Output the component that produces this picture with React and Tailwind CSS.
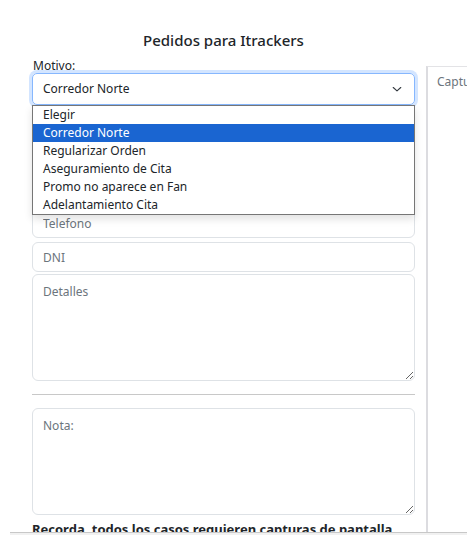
const font = { fontFamily: '"Segoe UI", "Noto Sans", "Open Sans", sans-serif' };

const options = [
  'Elegir',
  'Corredor Norte',
  'Regularizar Orden',
  'Aseguramiento de Cita',
  'Promo no aparece en Fan',
  'Adelantamiento Cita',
];

function Input({ placeholder }) {
  return (
    <input
      type="text"
      placeholder={placeholder}
      className="h-[30px] w-full rounded-[6px] border border-[#dee2e6] bg-white px-[10px] text-[12px] text-[#212529] placeholder:text-[#6c757d] outline-none"
    />
  );
}

function Area({ placeholder, className = '' }) {
  return (
    <textarea
      placeholder={placeholder}
      className={`block h-[107px] w-full rounded-[6px] border border-[#dee2e6] bg-white px-[10px] py-[8px] text-[12px] text-[#212529] placeholder:text-[#6c757d] outline-none resize-y ${className}`}
    />
  );
}

export default function App() {
  return (
    <div className="relative h-[535px] w-[467px] overflow-hidden bg-white text-[#212529]" style={font}>
      <div className="flex pt-[30px]">
        <div className="ml-[32px] w-[383px] shrink-0">
          <h1 className="text-center text-[15px] font-medium leading-[20px]">Pedidos para Itrackers</h1>
          <label className="mt-[8px] block pl-[1px] text-[12px] leading-[16px]">Motivo:</label>
          <div className="relative mt-[-1px]">
            <div className="flex h-[32px] items-center justify-between rounded-[5px] border border-[#86b7fe] px-[10px] text-[12px] shadow-[0_0_0_3px_rgba(13,110,253,0.18)]">
              <span>Corredor Norte</span>
              <svg width="12" height="12" viewBox="0 0 16 16" className="mr-[1px]">
                <path d="M3 6l5 4.5L13 6" fill="none" stroke="#343a40" strokeWidth="1.5" strokeLinecap="round" strokeLinejoin="round" />
              </svg>
            </div>
            <ul className="absolute left-0 top-[32px] z-10 w-full border border-[#767676] bg-white shadow-[0_4px_8px_rgba(0,0,0,0.12)]">
              {options.map((o) => (
                <li
                  key={o}
                  className={`h-[18px] px-[10px] text-[12px] leading-[18px] ${o === 'Corredor Norte' ? 'bg-[#1a65d1] text-white' : 'text-[#212529]'}`}
                >
                  {o}
                </li>
              ))}
            </ul>
          </div>
          <div className="mt-[1px] flex flex-col gap-[4px]">
            <Input placeholder="Nombre" />
            <Input placeholder="Apellido" />
            <Input placeholder="Correo" />
            <Input placeholder="Telefono" />
            <Input placeholder="DNI" />
            <Area placeholder="Detalles" className="mt-[-2px]" />
          </div>
          <hr className="my-[13px] border-t border-[#c8c8c8]" />
          <Area placeholder="Nota:" />
          <p className="mt-[5px] whitespace-nowrap text-[13px] font-bold leading-[18px]">Recorda, todos los casos requieren capturas de pantalla</p>
        </div>
        <div className="ml-[11px] mt-[36px] h-[600px] flex-1 border-l-2 border-t border-l-[#dcdce0] border-t-[#e3e3e6] pl-[9px] pt-[6px] text-[12px] text-[#6c757d]">
          Capturas
        </div>
      </div>
      <div className="absolute bottom-0 left-[10px] right-0 h-[3px] border-t border-[#c8c8c8] bg-[#f1f1f1]" />
    </div>
  );
}
